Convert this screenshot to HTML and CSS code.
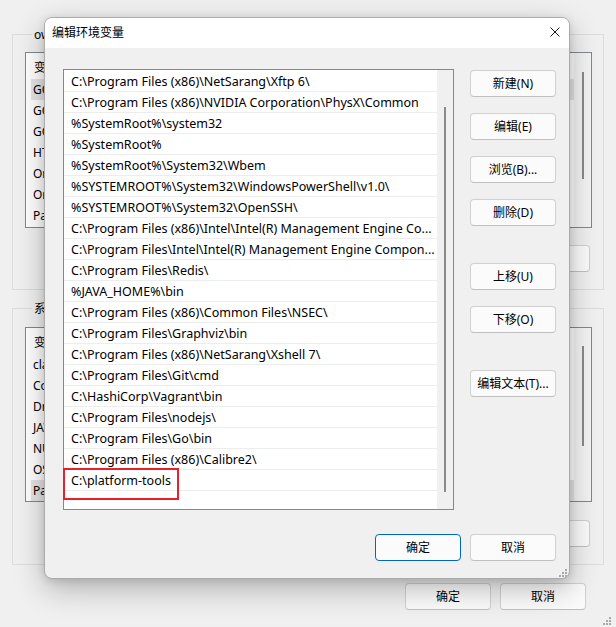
FILE: index.html
```html
<!DOCTYPE html>
<html lang="zh-CN">
<head>
<meta charset="utf-8">
<title>编辑环境变量</title>
<link rel="stylesheet" href="styles.css">
</head>
<body>
<div class="parent">
  <div class="group">
    <div class="legend">owner 的用户变量(U)</div>
    <div class="plist">
      <div class="pcol">
        <div class="phead"><span class="c1">变量</span><span>值</span></div>
        <div class="prow sel">GOPATH</div>
        <div class="prow">GOPROXY</div>
        <div class="prow">GOROOT</div>
        <div class="prow">HTTP_PROXY</div>
        <div class="prow">OneDrive</div>
        <div class="prow">OneDriveConsumer</div>
        <div class="prow">Path</div>
      </div>
      <div class="pscroll"><div class="pthumb"></div></div>
    </div>
    <div class="pbtns">
      <button class="btn">新建(N)...</button>
      <button class="btn">编辑(E)...</button>
      <button class="btn">删除(D)</button>
    </div>
  </div>
  <div class="group group-sys">
    <div class="legend">系统变量(S)</div>
    <div class="plist">
      <div class="pcol">
        <div class="phead"><span class="c1">变量</span><span>值</span></div>
        <div class="prow">classpath</div>
        <div class="prow">ComSpec</div>
        <div class="prow">DriverData</div>
        <div class="prow">JAVA_HOME</div>
        <div class="prow">NUMBER_OF_PROCESSORS</div>
        <div class="prow">OS</div>
        <div class="prow sel">Path</div>
      </div>
      <div class="pscroll"><div class="pthumb pthumb-sys"></div></div>
    </div>
    <div class="pbtns">
      <button class="btn">新建(W)...</button>
      <button class="btn">编辑(I)...</button>
      <button class="btn">删除(L)</button>
    </div>
  </div>
  <div class="pfoot">
    <button class="btn">确定</button>
    <button class="btn">取消</button>
  </div>
</div>
<svg class="pgrip" width="8" height="8" viewBox="0 0 8 8"><rect x="6" y="0" width="2" height="2"/><rect x="3" y="3" width="2" height="2"/><rect x="6" y="3" width="2" height="2"/><rect x="0" y="6" width="2" height="2"/><rect x="3" y="6" width="2" height="2"/><rect x="6" y="6" width="2" height="2"/></svg>

<div class="dialog">
  <div class="titlebar">
    <span class="title">编辑环境变量</span>
    <svg class="close" width="10" height="10" viewBox="0 0 10 10"><path d="M0.5 0.5 L9.5 9.5 M9.5 0.5 L0.5 9.5" stroke="#1a1a1a" stroke-width="1" fill="none"/></svg>
  </div>
  <div class="dbody">
    <div class="main">
      <div class="list">
        <div class="rows">
          <div class="row">C:\Program Files (x86)\NetSarang\Xftp 6\</div>
          <div class="row">C:\Program Files (x86)\NVIDIA Corporation\PhysX\Common</div>
          <div class="row">%SystemRoot%\system32</div>
          <div class="row">%SystemRoot%</div>
          <div class="row">%SystemRoot%\System32\Wbem</div>
          <div class="row">%SYSTEMROOT%\System32\WindowsPowerShell\v1.0\</div>
          <div class="row">%SYSTEMROOT%\System32\OpenSSH\</div>
          <div class="row">C:\Program Files (x86)\Intel\Intel(R) Management Engine Co...</div>
          <div class="row">C:\Program Files\Intel\Intel(R) Management Engine Compon...</div>
          <div class="row">C:\Program Files\Redis\</div>
          <div class="row">%JAVA_HOME%\bin</div>
          <div class="row">C:\Program Files (x86)\Common Files\NSEC\</div>
          <div class="row">C:\Program Files\Graphviz\bin</div>
          <div class="row">C:\Program Files (x86)\NetSarang\Xshell 7\</div>
          <div class="row">C:\Program Files\Git\cmd</div>
          <div class="row">C:\HashiCorp\Vagrant\bin</div>
          <div class="row">C:\Program Files\nodejs\</div>
          <div class="row">C:\Program Files\Go\bin</div>
          <div class="row">C:\Program Files (x86)\Calibre2\</div>
          <div class="row">C:\platform-tools</div>
        </div>
        <div class="vscroll"><div class="thumb"></div></div>
        <div class="annot"></div>
      </div>
      <div class="side">
        <button class="btn">新建(N)</button>
        <button class="btn">编辑(E)</button>
        <button class="btn">浏览(B)...</button>
        <button class="btn">删除(D)</button>
        <button class="btn gap">上移(U)</button>
        <button class="btn">下移(O)</button>
        <button class="btn gap">编辑文本(T)...</button>
      </div>
    </div>
    <div class="dfoot">
      <button class="btn primary">确定</button>
      <button class="btn">取消</button>
    </div>
  </div>
  <svg class="grip" width="8" height="8" viewBox="0 0 8 8"><rect x="6" y="0" width="2" height="2"/><rect x="3" y="3" width="2" height="2"/><rect x="6" y="3" width="2" height="2"/><rect x="0" y="6" width="2" height="2"/><rect x="3" y="6" width="2" height="2"/><rect x="6" y="6" width="2" height="2"/></svg>
</div>
</body>
</html>
```

FILE: styles.css
```css
* { box-sizing: border-box; }
html, body { margin: 0; padding: 0; }
body {
  width: 616px;
  height: 627px;
  overflow: hidden;
  position: relative;
  background: #f0f0f0;
  font-family: "Noto Sans", "Noto Sans CJK SC", sans-serif;
  font-size: 12px;
  color: #000;
}

/* ---------- parent window (mostly covered by the dialog) ---------- */
.parent { padding: 34px 12px 0 12px; }
.group {
  border: 1px solid #dcdcdc;
  padding: 0 11px 17px 12px;
}
.group-sys { margin-top: 18px; }
.legend {
  display: block;
  width: fit-content;
  margin: -9px 0 0 7px;
  padding: 0 2px;
  height: 17px;
  line-height: 17px;
  background: #f0f0f0;
  white-space: nowrap;
}
.plist {
  margin-top: 9px;
  height: 176px;
  border: 1px solid #828790;
  background: #fff;
  display: flex;
}
.group-sys .plist { margin-top: 10px; height: 175px; }
.pcol { flex: 1; padding-left: 5px; }
.phead { height: 26px; line-height: 30px; padding-left: 3px; display: flex; }
.phead .c1 { width: 160px; }
.prow { height: 21px; line-height: 21px; padding-left: 2px; white-space: nowrap; }
.prow.sel { background: #e5e5e5; }
.pscroll { width: 17px; background: #f3f3f3; }
.pthumb { width: 2px; height: 107px; margin: 19px 0 0 8px; background: #8a8a8a; }
.pthumb-sys { margin-top: 18px; height: 100px; }
.pbtns {
  display: flex;
  justify-content: flex-end;
  gap: 10px;
  margin: 17px 2px 0 0;
}
.group-sys .pbtns { margin-top: 18px; }
.pfoot {
  display: flex;
  justify-content: flex-end;
  gap: 9px;
  margin: 18px 18px 0 0;
}
.btn {
  width: 86px;
  height: 27px;
  padding: 0;
  border: 1px solid #d0d0d0;
  border-bottom-color: #c0c0c0;
  border-radius: 4px;
  background: #fbfbfb;
  font-family: inherit;
  font-size: 12px;
  color: #000;
  line-height: 25px;
}
.pgrip { position: absolute; right: 5px; bottom: 2px; fill: #a8a8a8; }

/* ---------- dialog ---------- */
.dialog {
  position: absolute;
  left: 44px;
  top: 17px;
  width: 526px;
  height: 562px;
  border: 1px solid #ababab;
  border-radius: 8px;
  background: #f0f0f0;
  box-shadow: 0 10px 30px rgba(0, 0, 0, 0.26), 0 2px 8px rgba(0, 0, 0, 0.12);
  display: flex;
  flex-direction: column;
  overflow: hidden;
}
.titlebar {
  height: 30px;
  flex: none;
  background: #fff;
  display: flex;
  align-items: center;
  justify-content: space-between;
  padding: 0 9px 2px 7px;
}
.title { font-size: 12px; }
.close { display: block; }
.dbody {
  flex: 1;
  padding: 21px 13px 0 18px;
  display: flex;
  flex-direction: column;
}
.main { display: flex; gap: 16px; }
.list {
  position: relative;
  width: 391px;
  height: 441px;
  border: 1px solid #828790;
  background: #fff;
  display: flex;
}
.rows { flex: 1; padding-top: 1px; overflow: hidden; }
.row {
  height: 21px;
  line-height: 22px;
  padding-left: 7px;
  border-bottom: 1px solid #ededed;
  font-size: 12.5px;
  white-space: nowrap;
}
.vscroll { width: 16px; background: #f0f0f0; }
.thumb { width: 2px; height: 385px; margin: 37px 0 0 7px; background: #8a8a8a; }
.annot {
  position: absolute;
  left: -1px;
  top: 398px;
  width: 116px;
  height: 32px;
  border: 2px solid #e8202a;
}
.side {
  display: flex;
  flex-direction: column;
  gap: 16px;
  padding-top: 1px;
}
.side .gap { margin-top: 21px; }
.dfoot {
  display: flex;
  justify-content: flex-end;
  gap: 9px;
  margin-top: 24px;
}
.btn.primary { border: 1px solid #0067c0; }
.grip { position: absolute; right: 2px; bottom: 1px; fill: #a8a8a8; }
```
